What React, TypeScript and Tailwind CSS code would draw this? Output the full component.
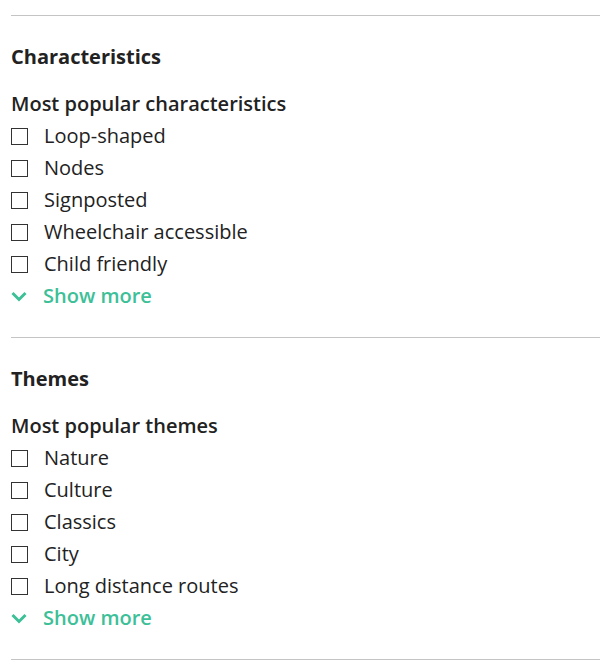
import React from "react";

const sections = [
  {
    title: "Characteristics",
    sub: "Most popular characteristics",
    items: ["Loop-shaped", "Nodes", "Signposted", "Wheelchair accessible", "Child friendly"],
  },
  {
    title: "Themes",
    sub: "Most popular themes",
    items: ["Nature", "Culture", "Classics", "City", "Long distance routes"],
  },
];

function Chevron() {
  return (
    <svg width="16" height="11" viewBox="0 0 16 11" className="shrink-0">
      <path d="M1.5 2 L8 8.5 L14.5 2" fill="none" stroke="#3dbf98" strokeWidth="3" />
    </svg>
  );
}

export default function App() {
  return (
    <div className="bg-white w-[608px] h-[664px] pt-[15px] pl-[11px]" style={{ fontFamily: '"Open Sans", sans-serif' }}>
      <div className="w-[589px]">
        {sections.map((s) => (
          <div key={s.title} className="border-t border-[#c4c4c4] pt-[29px] pb-[25px]">
            <div className="h-6 leading-6 text-[20px] font-bold text-[#222]">{s.title}</div>
            <div className="mt-[23px] h-6 leading-6 text-[20px] font-semibold text-[#222]">{s.sub}</div>
            <div className="mt-1 flex flex-col">
              {s.items.map((it) => (
                <label key={it} className="h-8 flex items-center">
                  <span className="w-[17px] h-[17px] border border-[#333] bg-white shrink-0" />
                  <span className="ml-[16px] text-[20px] text-[#222] leading-8">{it}</span>
                </label>
              ))}
              <div className="h-8 flex items-center">
                <Chevron />
                <span className="ml-4 text-[20px] font-semibold text-[#3dbf98] leading-8">Show more</span>
              </div>
            </div>
          </div>
        ))}
        <div className="border-t border-[#c4c4c4]" />
      </div>
    </div>
  );
}
